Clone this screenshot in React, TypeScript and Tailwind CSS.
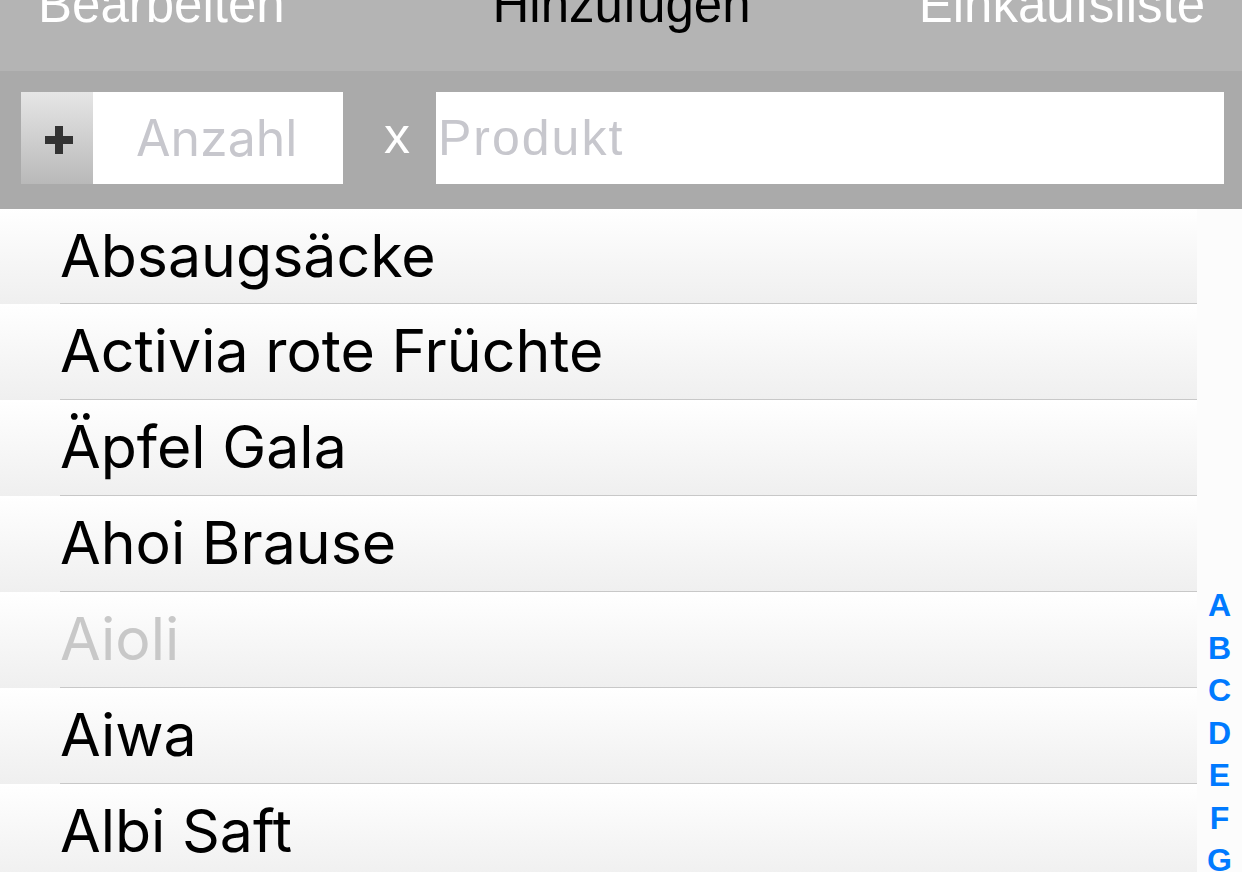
import React from 'react'

const items = [
  { name: 'Absaugsäcke' },
  { name: 'Activia rote Früchte' },
  { name: 'Äpfel Gala' },
  { name: 'Ahoi Brause' },
  { name: 'Aioli', done: true },
  { name: 'Aiwa' },
  { name: 'Albi Saft' },
]

const letters = ['A', 'B', 'C', 'D', 'E', 'F', 'G']

function App() {
  return (
    <div className="h-[872px] w-[1242px] overflow-hidden bg-white font-['Liberation_Sans',sans-serif]">
      {/* navigation bar */}
      <div className="grid h-[71px] grid-cols-3 items-start bg-[#b4b4b4] pl-[38px] pr-[37px] text-[51px] leading-none">
        <span className="-mt-[21px] justify-self-start text-white">Bearbeiten</span>
        <span className="-mt-[21px] justify-self-center whitespace-nowrap text-black">Hinzufügen</span>
        <span className="-mt-[21px] justify-self-end text-white">Einkaufsliste</span>
      </div>

      {/* entry bar */}
      <div className="flex h-[138px] items-start bg-[#aaaaaa] pl-[21px] pr-[18px] pt-[21px]">
        <div className="flex h-[92px] w-[72px] items-center justify-center bg-gradient-to-b from-[#e6e6e6] to-[#b9b9b9]">
          <svg width="30" height="30" viewBox="0 0 30 30" className="ml-[4px] mt-[4px]">
            <rect x="11" y="1" width="8" height="28" fill="#333" />
            <rect x="1" y="11" width="28" height="8" fill="#333" />
          </svg>
        </div>
        <div className="flex h-[92px] w-[250px] items-center bg-white pl-[43px] font-['Inter',sans-serif] text-[50px] text-[#c7c7cd]">
          Anzahl
        </div>
        <div className="flex h-[92px] w-[93px] items-center justify-center pb-[6px] pl-[15px] text-[52px] text-white">
          x
        </div>
        <div className="flex h-[92px] flex-1 items-center bg-white pl-[2px] text-[50px] tracking-[2px] text-[#c7c7cd]">
          Produkt
        </div>
      </div>

      {/* list + index */}
      <div className="flex">
        <div className="w-[1197px]">
          {items.map((it, i) => (
            <div
              key={it.name}
              className={`bg-gradient-to-b from-white to-[#efefef] pl-[60px] ${i === 0 ? 'h-[95px]' : 'h-[96px]'}`}
            >
              <div
                className={`flex h-full items-center border-b border-[#c8c8c8] font-['Inter',sans-serif] text-[59px] ${
                  it.done ? 'text-[#c8c8c8]' : 'text-black'
                }`}
              >
                {it.name}
              </div>
            </div>
          ))}
        </div>
        <div className="flex flex-1 flex-col items-center bg-[#fcfcfc] pt-[375px]">
          {letters.map((l) => (
            <div key={l} className="h-[42.5px] font-['Liberation_Sans',sans-serif] text-[32px] font-bold leading-[42.5px] text-[#007aff]">
              {l}
            </div>
          ))}
        </div>
      </div>
    </div>
  )
}

export default App
